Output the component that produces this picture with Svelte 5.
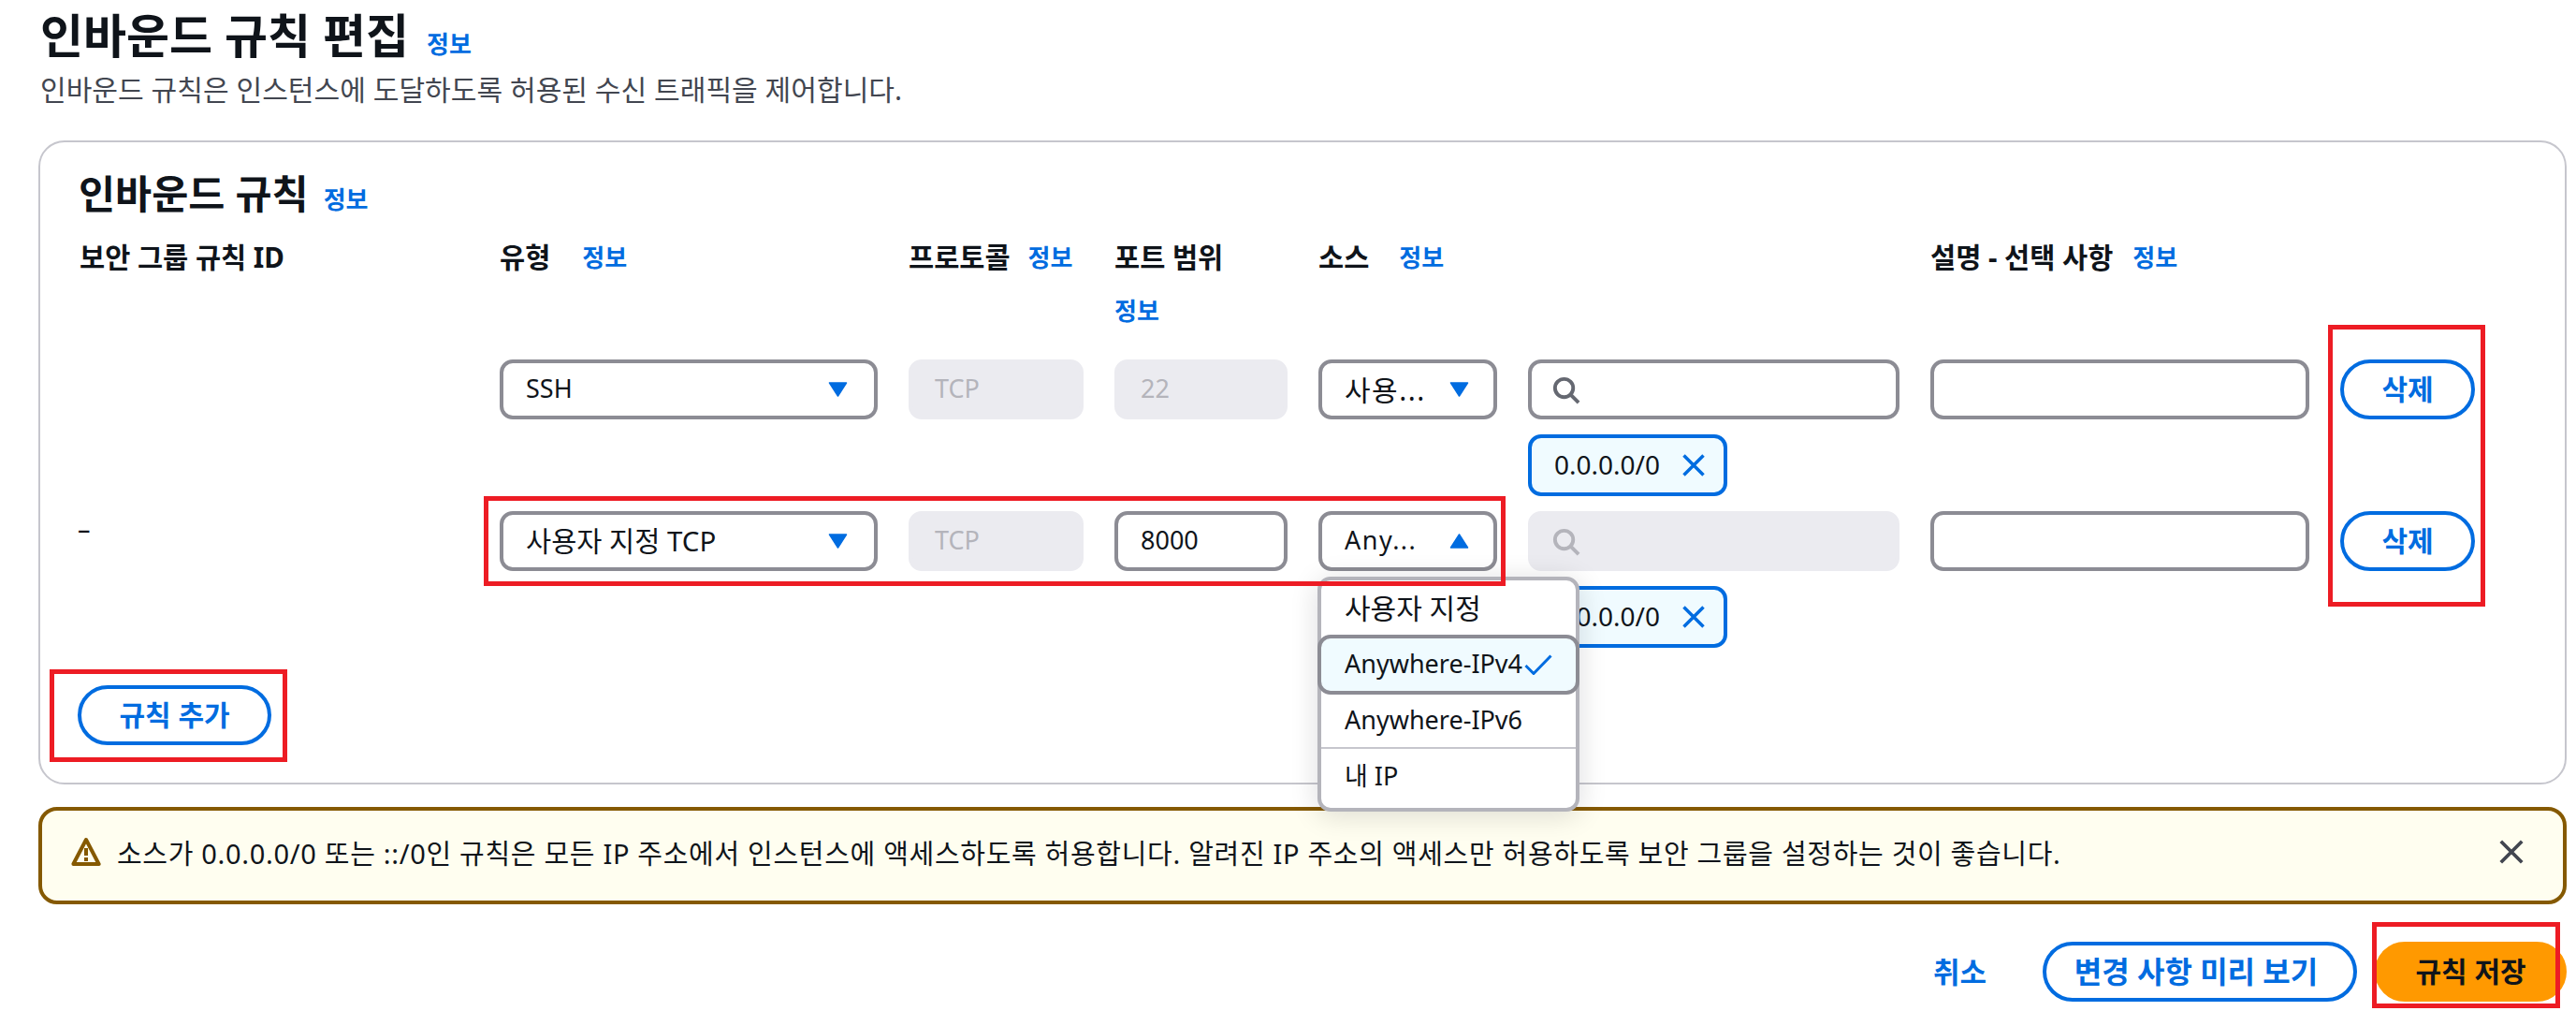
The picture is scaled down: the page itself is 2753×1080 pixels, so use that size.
<script>
  const info = '정보';
</script>

{#snippet caret(up)}
  <svg class="caret" viewBox="0 0 20 16" aria-hidden="true">
    {#if up}
      <path d="M10 1 19 15H1z" />
    {:else}
      <path d="M1 1h18L10 15z" />
    {/if}
  </svg>
{/snippet}

{#snippet search(off)}
  <svg class="glass" class:off viewBox="0 0 16 16" aria-hidden="true">
    <circle cx="7" cy="7" r="5" />
    <path d="m15 15-4.5-4.5" />
  </svg>
{/snippet}

{#snippet tag()}
  <div class="tag">
    <span>0.0.0.0/0</span>
    <svg class="x" viewBox="0 0 16 16" aria-hidden="true"><path d="m2 2 12 12M14 2 2 14" /></svg>
  </div>
{/snippet}

<div class="page">
  <header class="head">
    <h1>인바운드 규칙 편집</h1>
    <a class="link">{info}</a>
  </header>
  <p class="sub">인바운드 규칙은 인스턴스에 도달하도록 허용된 수신 트래픽을 제어합니다.</p>

  <section class="card">
    <div class="card-head">
      <h2>인바운드 규칙</h2>
      <a class="link">{info}</a>
    </div>

    <div class="grid">
      <div class="th">보안 그룹 규칙 ID</div>
      <div class="th type-th"><span>유형</span><a class="link">{info}</a></div>
      <div class="th proto-th"><span>프로토콜</span><a class="link">{info}</a></div>
      <div class="th col"><span>포트 범위</span><a class="link">{info}</a></div>
      <div class="th src-th"><span>소스</span><a class="link">{info}</a></div>
      <div class="th"></div>
      <div class="th desc-th"><span>설명 - 선택 사항</span><a class="link">{info}</a></div>
      <div class="th"></div>

      <div></div>
      <div class="box sel"><span>SSH</span>{@render caret(false)}</div>
      <div class="box dis">TCP</div>
      <div class="box dis">22</div>
      <div class="box sel tight"><span class="ko dots">사용...</span>{@render caret(false)}</div>
      <div class="stack">
        <div class="box icon-box">{@render search(false)}</div>
        {@render tag()}
      </div>
      <div class="box"></div>
      <button class="btn del">삭제</button>

      <div class="dash">–</div>
      <div class="box sel"><span class="mix">사용자 지정 TCP</span>{@render caret(false)}</div>
      <div class="box dis">TCP</div>
      <div class="box">8000</div>
      <div class="src-cell">
        <div class="box sel tight"><span class="dots">Any...</span>{@render caret(true)}</div>
        <ul class="menu">
          <li class="first ko">사용자 지정</li>
          <li class="on"><span>Anywhere-IPv4</span>
            <svg class="check" viewBox="0 0 30 22" aria-hidden="true"><path d="M1.5 12 10 20.5 28.5 1.5" /></svg>
          </li>
          <li class="third">Anywhere-IPv6</li>
          <li class="last">내 IP</li>
        </ul>
      </div>
      <div class="stack">
        <div class="box dis icon-box">{@render search(true)}</div>
        {@render tag()}
      </div>
      <div class="box"></div>
      <button class="btn del">삭제</button>
    </div>

    <button class="btn add">규칙 추가</button>
  </section>

  <div class="alert">
    <svg class="warn" viewBox="0 0 16 16" aria-hidden="true">
      <path d="M8 1.5 14.8 14.5H1.2z" />
      <path d="M8 6v4M8 11v2" />
    </svg>
    <p>소스가 0.0.0.0/0 또는 ::/0인 규칙은 모든 IP 주소에서 인스턴스에 액세스하도록 허용합니다. 알려진 IP 주소의 액세스만 허용하도록 보안 그룹을 설정하는 것이 좋습니다.</p>
    <svg class="close" viewBox="0 0 16 16" aria-hidden="true"><path d="m2 2 12 12M14 2 2 14" /></svg>
  </div>

  <footer class="actions">
    <a class="cancel">취소</a>
    <button class="btn preview">변경 사항 미리 보기</button>
    <button class="btn save">규칙 저장</button>
  </footer>

  <div class="mark m1"></div>
  <div class="mark m2"></div>
  <div class="mark m3"></div>
  <div class="mark m4"></div>
</div>

<style>
  :global(body) {
    margin: 0;
    background: #fff;
  }
  .page {
    position: relative;
    width: 2753px;
    height: 1080px;
    box-sizing: border-box;
    padding: 0 10px 0 41px;
    overflow: hidden;
    font-family: "Noto Sans", "Noto Sans CJK KR", sans-serif;
    font-size: 27px;
    color: #0f141a;
  }
  .head {
    display: flex;
    align-items: baseline;
    gap: 19px;
    padding-top: 8px;
    height: 60px;
    padding-left: 2px;
  }
  h1 {
    margin: 0;
    font-size: 50px;
    line-height: 60px;
    font-weight: 700;
  }
  h2 {
    margin: 0;
    margin-left: -1px;
    font-size: 42.5px;
    line-height: 50px;
    font-weight: 700;
  }
  .link {
    color: #006ce0;
    font-weight: 700;
    font-size: 26px;
  }
  .sub {
    margin: 0;
    padding-left: 2px;
    margin-top: 6px;
    line-height: 44px;
    font-size: 30.1px;
    color: #424650;
  }
  .ko { font-size: 30px; }
  .mix { font-size: 29.5px; }
  .dots { letter-spacing: 1.5px; }
  .card {
    margin-top: 32px;
    height: 688px;
    box-sizing: border-box;
    border: 2px solid #c6c6cd;
    border-radius: 28px;
    padding: 30px 0 0 42px;
  }
  .card-head {
    display: flex;
    align-items: baseline;
    gap: 16px;
    height: 50px;
  }
  .grid {
    display: grid;
    grid-template-columns: 416px 404px 187px 185px 191px 397px 405px 144px;
    column-gap: 33px;
    row-gap: 16px;
    margin-top: 24px;
    align-items: start;
  }
  .th {
    height: 95px;
    margin-bottom: 17px;
    font-weight: 700;
    font-size: 29.5px;
    line-height: 38px;
    white-space: nowrap;
    display: flex;
    align-items: flex-start;
  }
  .type-th { gap: 34px; }
  .proto-th { gap: 19px; }
  .src-th { gap: 32px; }
  .desc-th { gap: 21px; }
  .col {
    flex-direction: column;
    gap: 19px;
  }
  .th .link { line-height: 38px; }
  .box {
    box-sizing: border-box;
    height: 64px;
    border: 4px solid #8c8c94;
    border-radius: 14px;
    background: #fff;
    display: flex;
    align-items: center;
    padding: 0 24px 3px;
    white-space: nowrap;
  }
  .icon-box {
    padding: 0 21px;
  }
  .sel {
    justify-content: space-between;
  }
  .tight {
    padding-right: 18px;
  }
  .dis {
    background: #ebebf0;
    border-color: #ebebf0;
    color: #b4b4bb;
  }
  .caret {
    width: 21px;
    height: 16px;
    margin-top: 3px;
    margin-right: 4px;
    fill: #006ce0;
    stroke: #006ce0;
    stroke-width: 1.5;
    stroke-linejoin: round;
    flex: none;
  }
  .tight .caret {
    margin-right: 8px;
  }
  .glass {
    width: 31px;
    height: 31px;
    fill: none;
    stroke: #656871;
    stroke-width: 2;
  }
  .glass.off {
    stroke: #b4b4bb;
  }
  .stack {
    display: flex;
    flex-direction: column;
    gap: 16px;
    align-items: flex-start;
  }
  .stack .box {
    width: 100%;
  }
  .tag {
    box-sizing: border-box;
    height: 66px;
    width: 213px;
    border: 4px solid #006ce0;
    border-radius: 14px;
    background: #f0fbff;
    display: flex;
    align-items: center;
    justify-content: space-between;
    padding: 0 18px 0 24px;
    font-size: 28px;
  }
  .tag span {
    padding-bottom: 3px;
  }
  .x {
    width: 28px;
    height: 28px;
    fill: none;
    stroke: #006ce0;
    stroke-width: 2;
  }
  .btn {
    box-sizing: border-box;
    height: 64px;
    border: 4px solid #006ce0;
    border-radius: 32px;
    background: #fff;
    color: #006ce0;
    font: inherit;
    font-size: 30px;
    font-weight: 700;
    padding: 0 0 4px;
    white-space: nowrap;
  }
  .add {
    display: block;
    width: 207px;
    margin-top: 40px;
    margin-left: -2px;
  }
  .dash {
    line-height: 38px;
    margin-left: -2px;
  }
  .src-cell {
    position: relative;
  }
  .menu {
    position: absolute;
    left: -1px;
    top: 70px;
    width: 280px;
    height: 251px;
    box-sizing: border-box;
    margin: 0;
    padding: 0;
    list-style: none;
    background: #fff;
    border: 4px solid #b4b4bb;
    border-radius: 14px;
    box-shadow: 0 4px 30px rgba(0, 7, 22, 0.14);
    z-index: 2;
  }
  .menu li {
    display: flex;
    align-items: center;
    padding-left: 25px;
    padding-bottom: 3px;
    box-sizing: border-box;
  }
  .menu .first { height: 58px; }
  .menu .on {
    height: 64px;
    margin: 0 -4px;
    padding-left: 25px;
    background: #f0fbff;
    border: 4px solid #8c8c94;
    border-radius: 14px;
    position: relative;
  }
  .menu .third {
    height: 58px;
    border-bottom: 2px solid #c6c6cd;
  }
  .menu .last { height: 58px; }
  .check {
    width: 30px;
    height: 22px;
    margin-left: 2px;
    margin-top: 3px;
    fill: none;
    stroke: #006ce0;
    stroke-width: 3;
  }
  .alert {
    margin-top: 24px;
    height: 104px;
    box-sizing: border-box;
    border: 4px solid #855900;
    border-radius: 20px;
    background: #fffef0;
    display: flex;
    align-items: center;
    padding: 0 40px 0 31px;
  }
  .alert p {
    margin: 0;
    flex: 1;
    padding-left: 17px;
    white-space: nowrap;
    font-size: 29px;
    letter-spacing: 0.69px;
    padding-bottom: 8px;
  }
  .warn {
    width: 32px;
    height: 32px;
    margin-bottom: 8px;
    fill: none;
    stroke: #855900;
    stroke-width: 2;
    stroke-linejoin: round;
    flex: none;
  }
  .close {
    width: 30px;
    height: 30px;
    margin-bottom: 8px;
    fill: none;
    stroke: #424650;
    stroke-width: 2;
    flex: none;
  }
  .actions {
    margin-top: 40px;
    display: flex;
    align-items: center;
    justify-content: flex-end;
    height: 64px;
  }
  .cancel {
    color: #006ce0;
    font-weight: 700;
    font-size: 31px;
    margin-right: 60px;
    padding-bottom: 4px;
  }
  .preview {
    width: 336px;
    margin-right: 19px;
    font-size: 32px;
    padding-right: 8px;
  }
  .save {
    width: 205px;
    background: #ff9900;
    border-color: #ff9900;
    color: #0f141a;
  }
  .mark {
    position: absolute;
    box-sizing: border-box;
    border: 5px solid #ed1c24;
    pointer-events: none;
    z-index: 3;
  }
  .m1 { left: 517px; top: 530px; width: 1092px; height: 96px; }
  .m2 { left: 53px; top: 715px; width: 254px; height: 99px; }
  .m3 { left: 2488px; top: 347px; width: 168px; height: 301px; }
  .m4 { left: 2535px; top: 985px; width: 201px; height: 92px; }
</style>
